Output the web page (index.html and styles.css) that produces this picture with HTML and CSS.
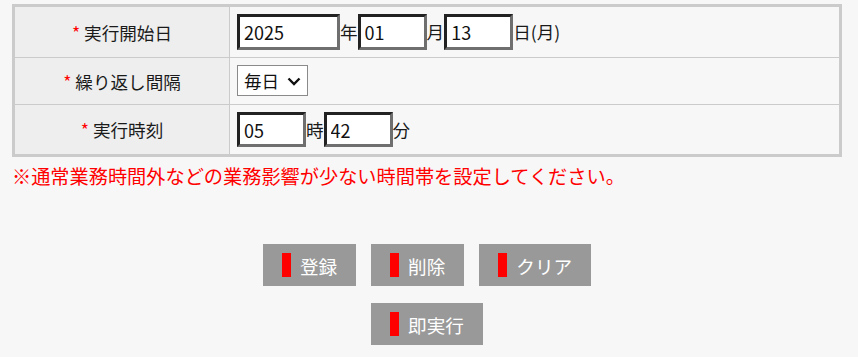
FILE: index.html
```html
<!DOCTYPE html>
<html lang="ja">

<head>
    <meta charset="UTF-8">
    <title>実行設定</title>
    <link rel="stylesheet" href="styles.css">
</head>

<body>
    <table class="form-table">
        <tr class="row-date">
            <th><span class="req">*</span> 実行開始日</th>
            <td>
                <div class="field">
                    <input type="text" class="num year" value="2025"><span>年</span><input type="text" class="num" value="01"><span>月</span><input type="text" class="num" value="13"><span>日(月)</span>
                </div>
            </td>
        </tr>
        <tr class="row-interval">
            <th><span class="req">*</span> 繰り返し間隔</th>
            <td>
                <div class="field">
                    <span class="select-wrap">
                        <select class="interval">
                            <option>毎日</option>
                            <option>毎週</option>
                            <option>毎月</option>
                        </select>
                        <svg class="chevron" width="14" height="9" viewBox="0 0 14 9">
                            <path d="M1.5 1.5 L7 7 L12.5 1.5" fill="none" stroke="#111" stroke-width="2.4" />
                        </svg>
                    </span>
                </div>
            </td>
        </tr>
        <tr class="row-time">
            <th><span class="req">*</span> 実行時刻</th>
            <td>
                <div class="field">
                    <input type="text" class="num" value="05"><span>時</span><input type="text" class="num" value="42"><span>分</span>
                </div>
            </td>
        </tr>
    </table>

    <p class="note">※通常業務時間外などの業務影響が少ない時間帯を設定してください。</p>

    <div class="buttons">
        <div class="btn-row">
            <button class="btn"><span class="bar"></span>登録</button>
            <button class="btn"><span class="bar"></span>削除</button>
            <button class="btn"><span class="bar"></span>クリア</button>
        </div>
        <div class="btn-row">
            <button class="btn"><span class="bar"></span>即実行</button>
        </div>
    </div>
</body>

</html>
```

FILE: styles.css
```css
body {
    margin: 0;
    padding: 4px 16px 0 12px;
    background-color: #f7f7f7;
    font-family: "Noto Sans CJK JP", "Noto Sans", sans-serif;
    color: #1a1a1a;
}

.form-table {
    width: 830px;
    border: 3px solid #cbcbcb;
    border-spacing: 0;
    font-size: 17.6px;
}

.form-table th {
    width: 214px;
    padding: 0;
    border-right: 1px solid #cbcbcb;
    border-bottom: 1px solid #cbcbcb;
    background-color: #eeeeee;
    font-weight: normal;
    text-align: center;
}

.form-table td {
    padding: 7px 7px;
    border-bottom: 1px solid #cbcbcb;
    background-color: #f7f7f7;
}

.form-table tr:last-child th,
.form-table tr:last-child td {
    border-bottom: none;
}

.row-interval td {
    padding: 7px 7px 8px;
}

.req {
    color: #ff0000;
}

.field {
    display: flex;
    align-items: center;
    line-height: 1;
}

.num {
    box-sizing: border-box;
    width: 69px;
    height: 36px;
    margin: 0;
    padding: 0 0 0 4px;
    border-style: solid;
    border-width: 3px;
    border-color: #222 #6f6f6f #6f6f6f #222;
    background-color: #fff;
    font-family: inherit;
    font-size: 18px;
    color: #111;
    outline: none;
}

.num.year {
    width: 103px;
}

.row-time .num {
    height: 35px;
}

.select-wrap {
    position: relative;
    display: inline-block;
}

.interval {
    box-sizing: border-box;
    width: 71px;
    height: 31px;
    margin: 0;
    padding: 0 0 0 6px;
    border: 1px solid #8a8a8a;
    border-radius: 0;
    background-color: #fff;
    font-family: inherit;
    font-size: 17.6px;
    color: #111;
    appearance: none;
    -webkit-appearance: none;
}

.chevron {
    position: absolute;
    top: 12px;
    left: 50px;
    pointer-events: none;
}

.note {
    margin: 8px 0 0;
    color: #ff0000;
    font-size: 19.2px;
    line-height: 1.2;
}

.buttons {
    width: 830px;
    margin-top: 56px;
    display: flex;
    flex-direction: column;
    align-items: center;
    gap: 17px;
}

.btn-row {
    display: flex;
    gap: 15px;
}

.btn {
    display: flex;
    align-items: center;
    height: 42px;
    padding: 0 19px;
    border: none;
    background-color: #999999;
    color: #fff;
    font-family: inherit;
    font-size: 18.6px;
    cursor: pointer;
}

.bar {
    display: inline-block;
    width: 9px;
    height: 24px;
    margin-right: 9px;
    background-color: #ff0000;
}
```
